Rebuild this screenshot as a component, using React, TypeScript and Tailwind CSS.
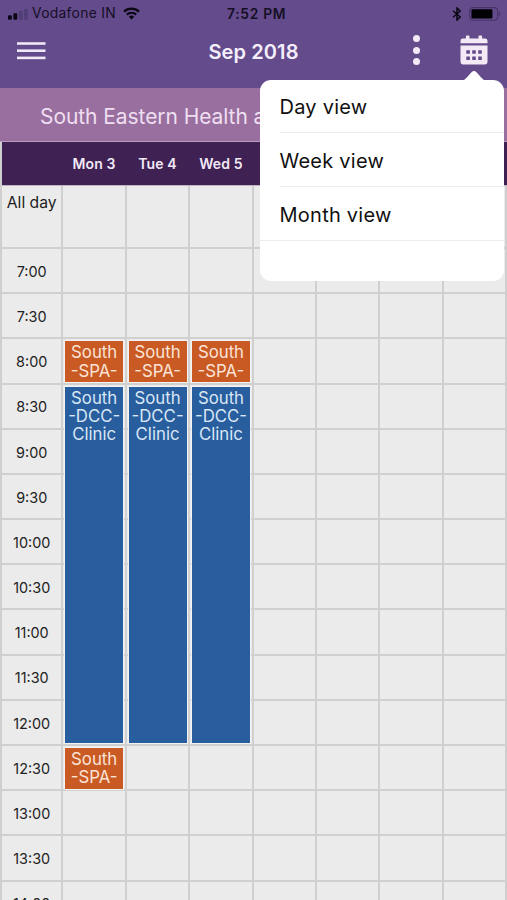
type CalendarEvent = {
  lines: string[];
  type: "spa" | "clinic";
};

const days = ["Mon 3", "Tue 4", "Wed 5", "", "", "", ""];

const times = [
  "7:00", "7:30", "8:00", "8:30", "9:00", "9:30", "10:00", "10:30",
  "11:00", "11:30", "12:00", "12:30", "13:00", "13:30", "14:00",
];

const spa: CalendarEvent = { lines: ["South", "-SPA-"], type: "spa" };
const clinic: CalendarEvent = { lines: ["South", "-DCC-", "Clinic"], type: "clinic" };

// events are keyed by the slot they start in, one entry per weekday
const events: Record<string, CalendarEvent[]> = {
  "8:00": [spa, spa, spa],
  "8:30": [clinic, clinic, clinic],
  "12:30": [spa],
};

const eventStyles = {
  spa: "h-[40.5px] bg-[#c95a24] text-[#fbe3d6]",
  clinic: "h-[356.5px] bg-[#285e9e] text-[#d9e6f5]",
};

const views = ["Day view", "Week view", "Month view"];

const columns = "grid grid-cols-[61.4px_repeat(7,63.4px)]";

const StatusBar = () => (
  <div className="relative flex h-[27px] items-center justify-between pl-2 pr-[5px] text-[#150f26]">
    <div className="flex items-center">
      <svg width="20" height="12" viewBox="0 0 20 12" className="mt-[3px]">
        <rect x="0" y="6.3" width="3.8" height="4.5" rx="1" fill="#0b0714" />
        <rect x="5.4" y="4.3" width="3.8" height="6.5" rx="1" fill="#0b0714" />
        <rect x="10.8" y="2" width="3.8" height="8.8" rx="1" fill="#513e77" />
        <rect x="16" y="0" width="3.8" height="10.8" rx="1" fill="#513e77" />
      </svg>
      <span className="ml-[4px] text-[13.8px] tracking-[0.32px] whitespace-nowrap">Vodafone IN</span>
      <svg width="17" height="13" viewBox="0 0 17 13" className="ml-[7.5px]">
        <path d="M1 4.6a11 11 0 0 1 15 0" fill="none" stroke="#0b0714" strokeWidth="2.3" />
        <path d="M3.8 7.6a7 7 0 0 1 9.4 0" fill="none" stroke="#0b0714" strokeWidth="2.1" />
        <path d="M5.8 9.7a4 4 0 0 1 5.4 0L8.5 12.5z" fill="#0b0714" />
      </svg>
    </div>
    <span className="absolute left-[227px] top-[4px] text-[13.8px] font-semibold tracking-[0.7px] whitespace-nowrap">7:52 PM</span>
    <div className="flex items-center">
      <svg width="10" height="14" viewBox="0 0 10 14">
        <path d="M1 3.8l7.2 6.2L5 13V1l3.2 3L1 10.2" fill="none" stroke="#0b0714" strokeWidth="1.5" />
      </svg>
      <svg width="33" height="14" viewBox="0 0 33 14" className="ml-[7px]">
        <rect x="0.6" y="0.6" width="28" height="12.6" rx="3.2" fill="none" stroke="#46346a" strokeWidth="1.1" />
        <rect x="2.4" y="2.3" width="21" height="9.2" rx="1.2" fill="#020104" />
        <path d="M30 4.8a2.4 2.4 0 0 1 0 4.4z" fill="#46346a" />
      </svg>
    </div>
  </div>
);

const Toolbar = () => (
  <div className="relative flex h-[61px] justify-between pl-[17px] pr-[19px]">
    <svg width="29" height="18" viewBox="0 0 29 18" className="mt-[14.5px]" fill="#efe8f6">
      <rect y="0.2" width="28.5" height="2.6" />
      <rect y="7.4" width="28.5" height="2.6" />
      <rect y="14.6" width="28.5" height="2.6" />
    </svg>
    <h1 className="absolute left-[208.5px] top-[11px] text-[20px] font-semibold leading-[28px] tracking-[0.1px] whitespace-nowrap text-[#f5effb]">Sep 2018</h1>
    <div className="flex">
      <div className="mr-[40.5px] mt-[8px] flex h-[30px] flex-col justify-between">
        <span className="size-[7px] rounded-full bg-[#f3eaf6]" />
        <span className="size-[7px] rounded-full bg-[#f3eaf6]" />
        <span className="size-[7px] rounded-full bg-[#f3eaf6]" />
      </div>
      <svg width="28" height="30" viewBox="0 0 28 30" className="mt-[8px]" fill="#f3eaf6">
        <path d="M.5 8.3V6a2.4 2.4 0 0 1 2.4-2.4h3V1.5a1 1 0 0 1 1-1h1.6a1 1 0 0 1 1 1v2.1h9V1.5a1 1 0 0 1 1-1h1.6a1 1 0 0 1 1 1v2.1h3A2.4 2.4 0 0 1 27.5 6v2.3z" />
        <path fillRule="evenodd" d="M.5 10.5h27V27a2.4 2.4 0 0 1-2.4 2.4H2.9A2.4 2.4 0 0 1 .5 27zM6.3 15.2v3.5h3.6v-3.5zM12.2 15.2v3.5h3.6v-3.5zM18.2 15.2v3.5h3.6v-3.5zM6.3 21.6V25h3.6v-3.4zM12.2 21.6V25h3.6v-3.4zM18.2 21.6V25h3.6v-3.4z" />
      </svg>
    </div>
  </div>
);

const EventBlock = ({ event }: { event: CalendarEvent }) => (
  <div
    className={`absolute left-[1.8px] top-[2px] z-10 w-[58px] pt-[2px] text-center text-[16.8px] leading-[18.3px] whitespace-nowrap outline outline-[#f3f3f4] ${eventStyles[event.type]}`}
  >
    {event.lines.map((line) => (
      <div key={line}>{line}</div>
    ))}
  </div>
);

const ViewMenu = () => (
  <div className="absolute left-[260px] top-[80px] z-20 h-[200.5px] w-[244px] rounded-[11px] bg-white">
    <svg width="24" height="11" viewBox="0 0 24 11" className="absolute left-[202px] top-[-10px]">
      <path d="M0 11C3 10 5 7 9.5 2.2q2.5-2.4 5 0C19 7 21 10 24 11z" fill="#fff" />
    </svg>
    {views.map((view, index) => (
      <div
        key={view}
        className={`flex h-[54px] items-center border-b border-[#ededef] pt-[2px] text-[20px] tracking-[0.25px] text-[#111] first-of-type:h-[53px] ${index === 2 ? "pl-[19.5px]" : "ml-[19.5px]"}`}
      >
        {view}
      </div>
    ))}
  </div>
);

const App = () => {
  return (
    <main className="relative h-[900px] w-[507px] overflow-hidden bg-[#ebebeb] font-['Inter',sans-serif]">
      <header className="h-[88px] bg-[#644b8b]">
        <StatusBar />
        <Toolbar />
      </header>

      <div className="flex h-[54px] items-center border-b border-[#b99fbc] bg-[#996f9f] pl-[40px] pt-[5px] text-[21px] tracking-[-0.07px] whitespace-nowrap text-[#efdff1]">
        South Eastern Health a
      </div>

      <section className="h-[758px] overflow-hidden border-l-2 border-[#cfcfcf]">
        <div className={`${columns} h-[44.4px] items-center border-b border-[#bcb4c2] bg-[#3f2154] text-[14px] font-semibold text-[#f2e9f7]`}>
          <span />
          {days.map((day, index) => (
            <span key={index} className="pr-[2px] text-center tracking-[0.1px] whitespace-nowrap">{day}</span>
          ))}
        </div>

        <div className={`${columns} h-[62.6px]`}>
          <div className="border-b-2 border-r-2 border-[#d0d0d0] pt-[5px] text-center text-[15.7px] whitespace-nowrap text-[#222]">All day</div>
          {days.map((_, index) => (
            <div key={index} className="border-b-2 border-r-2 border-[#d0d0d0]" />
          ))}
        </div>

        {times.map((time) => (
          <div key={time} className={`${columns} h-[45.2px]`}>
            <div className="flex items-center justify-center border-b-2 border-r-2 border-[#d0d0d0] pt-[2px] text-[14.4px] text-[#222]">{time}</div>
            {days.map((_, index) => (
              <div key={index} className="relative border-b-2 border-r-2 border-[#d0d0d0]">
                {events[time]?.[index] && <EventBlock event={events[time][index]} />}
              </div>
            ))}
          </div>
        ))}
      </section>

      <ViewMenu />
    </main>
  );
};

export default App;
